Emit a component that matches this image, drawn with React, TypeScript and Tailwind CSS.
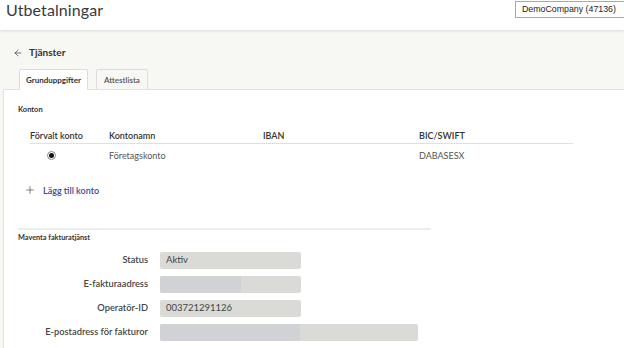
import { ArrowLeft, Plus } from "lucide-react";

const font = { fontFamily: "Lato, 'Noto Sans', sans-serif" };

function Field({ label, value, wide, redact }: { label: string; value?: string; wide?: boolean; redact?: number }) {
  return (
    <div className="flex items-center h-[24px]">
      <div className="w-[142px] pr-[12px] text-right text-[9.3px] font-semibold text-[#454545]">{label}</div>
      <div
        className={`relative h-[17px] rounded-[2px] bg-[#dadad7] overflow-hidden flex items-center px-[6px] text-[9.5px] text-[#444] ${
          wide ? "w-[258px]" : "w-[141px]"
        }`}
      >
        {redact ? <div className="absolute left-0 top-0 h-full bg-[#d1d2d6]" style={{ width: redact }} /> : null}
        <span className="relative">{value}</span>
      </div>
    </div>
  );
}

export default function App() {
  return (
    <div className="w-[624px] h-[348px] overflow-hidden bg-[#f7f7f4] text-[#333]" style={font}>
      <div className="relative z-10 h-[30px] bg-white flex items-start shadow-[0_1px_3px_rgba(0,0,0,0.12)] overflow-hidden">
        <div className="pl-[6px] pt-[0px] text-[16px] font-normal leading-[20px] text-[#3a3a3a] tracking-[0.1px]">Utbetalningar</div>
        <div className="ml-auto w-[109px] pt-[1px]">
          <div
            className="w-[120px] h-[17px] border border-[#a9a9a9] bg-white pl-[6px] flex items-center text-[#222]"
            style={{ fontFamily: "'Liberation Sans', Arial, sans-serif", fontSize: 8.8 }}
          >
            DemoCompany (47136)
          </div>
        </div>
      </div>

      <div className="pl-[13px] pt-[15px] flex items-center gap-[6px] h-[30px]">
        <ArrowLeft size={10} strokeWidth={1.6} className="text-[#333]" />
        <span className="text-[10px] font-bold text-[#333]">Tjänster</span>
      </div>

      <div className="flex pl-[19px] gap-[8px] mt-[9px] relative z-10">
        <div className="w-[69px] h-[21px] bg-white border border-[#dcdcdc] border-b-white rounded-t-[2px] flex items-center justify-center text-[8px] font-bold text-[#333]">
          Grunduppgifter
        </div>
        <div className="w-[52px] h-[20px] bg-[#f7f7f4] border border-[#dcdcdc] border-b-0 rounded-t-[2px] flex items-center justify-center text-[8px] font-semibold text-[#555]">
          Attestlista
        </div>
      </div>

      <div className="ml-[3px] -mt-px bg-white border-t border-l border-[#e2e2e2] h-[260px] pl-[14px]">
        <div className="pt-[14px] text-[7.5px] font-bold text-[#333]">Konton</div>

        <div className="ml-[12px] mt-[14px] w-[543px]">
          <div className="grid grid-cols-[79px_154px_156px_1fr] h-[13px] items-center text-[9px] font-semibold text-[#333] border-b border-[#e0e0e0] pb-[1px] box-content">
            <div>Förvalt konto</div>
            <div>Kontonamn</div>
            <div>IBAN</div>
            <div>BIC/SWIFT</div>
          </div>
          <div className="grid grid-cols-[79px_154px_156px_1fr] h-[22px] items-center text-[9px] text-[#555]">
            <div className="pl-[17px]">
              <div className="w-[9px] h-[9px] rounded-full border border-[#888] flex items-center justify-center">
                <div className="w-[5px] h-[5px] rounded-full bg-[#111]" />
              </div>
            </div>
            <div>Företagskonto</div>
            <div />
            <div>DABASESX</div>
          </div>
        </div>

        <div className="flex items-center gap-[7px] ml-[6px] mt-[16px] h-[16px]">
          <Plus size={12} strokeWidth={1.2} className="text-[#333]" />
          <span className="text-[9px] font-semibold text-[#3c4a8f]">Lägg till konto</span>
        </div>

        <div className="mt-[30px] w-[413px] h-[2px] bg-[#ececec]" />
        <div className="mt-[3px] text-[7.3px] font-bold text-[#333]">Maventa fakturatjänst</div>

        <div className="mt-[4px]">
          <Field label="Status" value="Aktiv" />
          <Field label="E-fakturaadress" redact={81} />
          <Field label="Operatör-ID" value="003721291126" />
          <Field label="E-postadress för fakturor" wide redact={140} />
        </div>
      </div>
    </div>
  );
}
